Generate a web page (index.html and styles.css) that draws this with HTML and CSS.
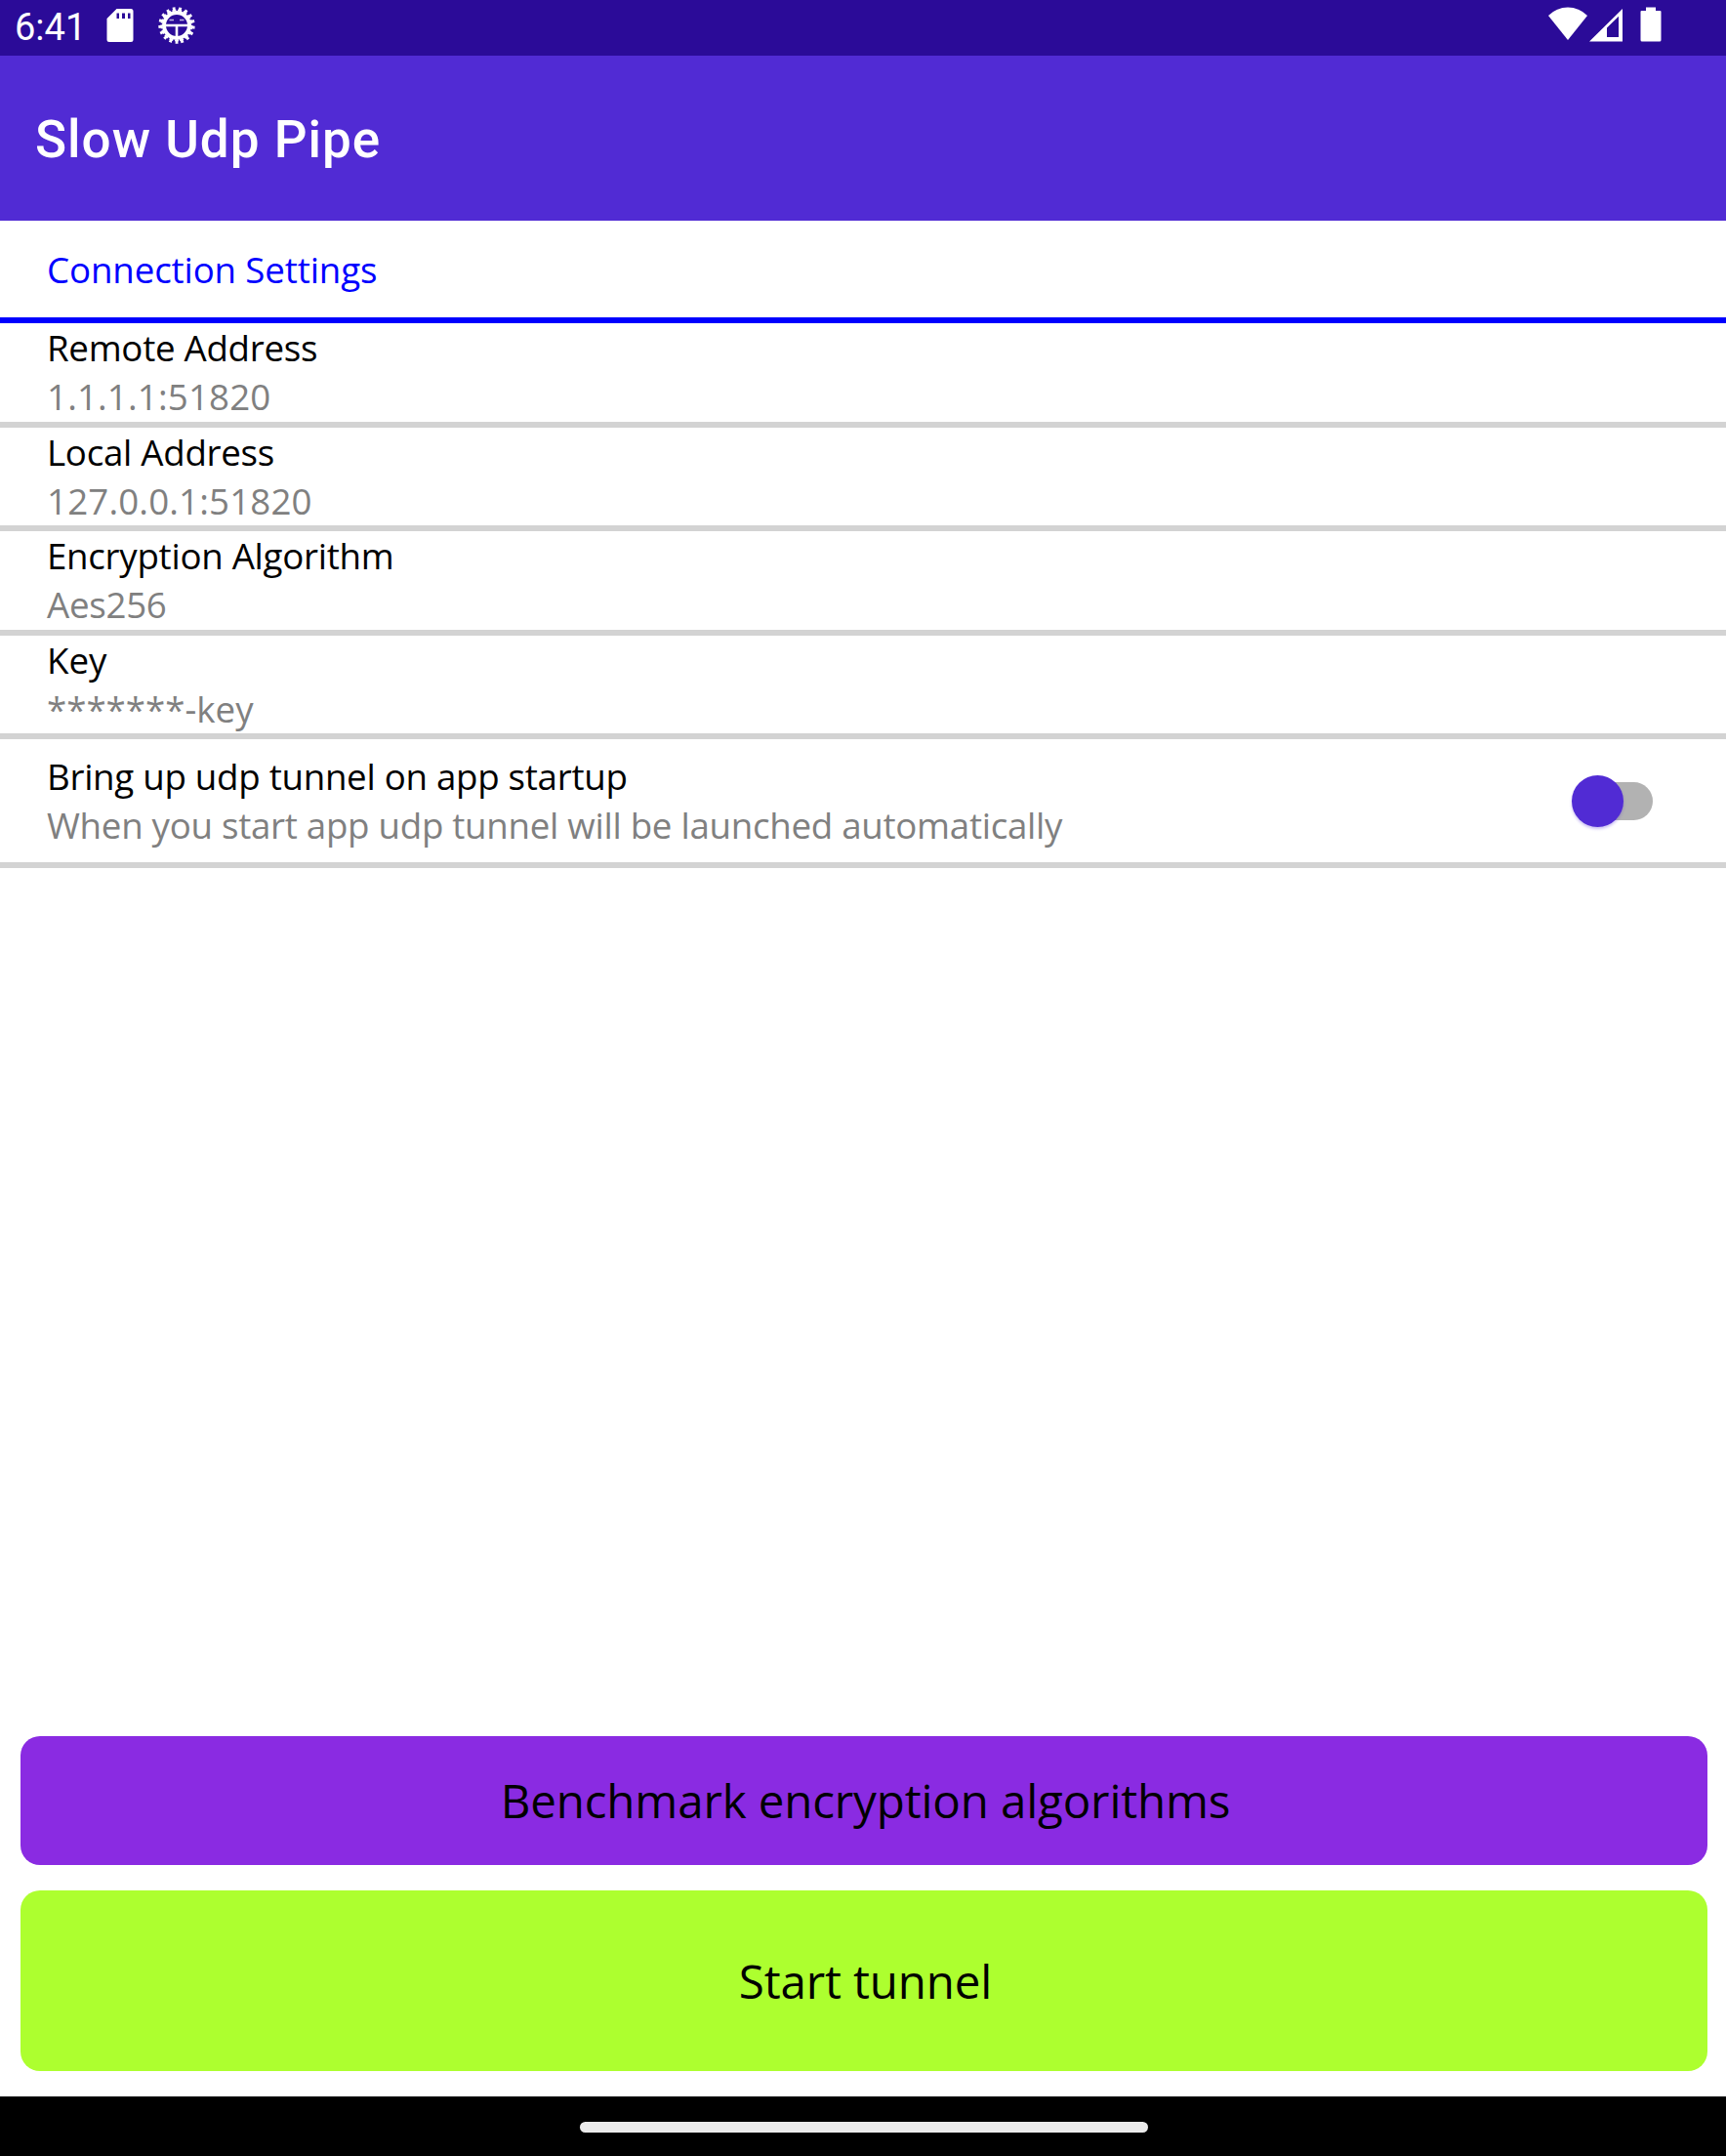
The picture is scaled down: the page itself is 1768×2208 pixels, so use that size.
FILE: index.html
```html
<!DOCTYPE html>
<html lang="en">
<head>
<meta charset="utf-8">
<title>Slow Udp Pipe</title>
<link rel="stylesheet" href="styles.css">
</head>
<body>
<div class="screen">
  <div class="status-bar">
    <span class="clock">6:41</span>
    <svg class="icon-sd" width="28" height="36" viewBox="0 0 28 36"><path fill="#fff" fill-rule="evenodd" d="M10.500 1H25Q27.500 1 27.500 3.500V32.500Q27.500 35 25 35H3Q.5 35 .5 32.500V11ZM10.500 5.500V11H13V5.500ZM16 5.500V11H19V5.500ZM22 5.500V11H24.500V5.500Z"/></svg>
    <svg class="icon-debug" width="40" height="40" viewBox="-20 -20 40 40" fill="none" stroke="#fff">
      <circle r="17" stroke-width="3.400" stroke-dasharray="2.800 3.483" transform="rotate(85.280)"/>
      <circle r="15.500" stroke-width="2" stroke-dasharray="4 1.729" transform="rotate(82.600)"/>
      <circle r="13" stroke-width="4"/>
      <path stroke-width="2.600" d="M-12 0H12M0 0V12"/>
      <path stroke-width="1.400" stroke-opacity=".7" d="M-7.500-5.500H-3M3-5.500H7.500"/>
    </svg>
    <svg class="icon-wifi" width="40" height="34" viewBox="0 0 40 34"><path fill="#fff" d="M20 34 0 9Q8.500 .5 20 .5T40 9Z"/></svg>
    <svg class="icon-signal" width="34" height="34" viewBox="0 0 34 34"><path fill="#fff" fill-rule="evenodd" d="M0 33.500 34 0V33.500ZM18 19.500V29H30V7.800Z"/></svg>
    <svg class="icon-battery" width="22" height="36" viewBox="0 0 22 36"><path fill="#fff" d="M6 4V.5H16V4H20.500Q21.500 4 21.500 5V34Q21.500 35.500 20 35.500H2Q.5 35.500 .5 34V5Q.5 4 1.500 4Z"/></svg>
  </div>
  <header class="app-bar"><h1 class="title">Slow Udp Pipe</h1></header>
  <main class="content">
    <h2 class="section"><span>Connection Settings</span></h2>
    <div class="row"><div><div class="label"><span>Remote Address</span></div><div class="value numeric"><span>1.1.1.1:51820</span></div></div></div>
    <div class="row"><div><div class="label"><span>Local Address</span></div><div class="value numeric"><span>127.0.0.1:51820</span></div></div></div>
    <div class="row"><div><div class="label"><span>Encryption Algorithm</span></div><div class="value"><span>Aes256</span></div></div></div>
    <div class="row row-key"><div><div class="label"><span>Key</span></div><div class="value"><span>*******-key</span></div></div></div>
    <div class="row row-switch">
      <div><div class="label"><span>Bring up udp tunnel on app startup</span></div><div class="value"><span>When you start app udp tunnel will be launched automatically</span></div></div>
      <div class="switch"><div class="thumb"></div></div>
    </div>
    <div class="actions">
      <button class="btn benchmark"><span>Benchmark encryption algorithms</span></button>
      <button class="btn start"><span>Start tunnel</span></button>
    </div>
  </main>
  <footer class="nav-bar"><div class="handle"></div></footer>
</div>
</body>
</html>
```
FILE: styles.css
```css
* { box-sizing: border-box; }
body { margin: 0; background: #fff; font-family: "Open Sans", sans-serif; }
h1, h2 { margin: 0; }
.screen { width: 1768px; height: 2208px; display: flex; flex-direction: column; }
.screen svg { display: block; flex: none; }

.status-bar { height: 57px; flex: none; padding: 0 66px 0 15px; display: flex; align-items: flex-start; background: #2b0b98; color: #fff; }
.clock { width: 94px; padding-top: 6px; font: 400 38px/44px Roboto, sans-serif; }
.icon-sd { margin-top: 8px; }
.icon-debug { margin: 6px auto 0 24px; }
.icon-wifi { margin: 7px 2px 0 0; }
.icon-signal { margin: 9px 18px 0 0; }
.icon-battery { margin-top: 7px; }

.app-bar { height: 169px; flex: none; padding: 3px 0 0 36px; display: flex; align-items: center; background: #512bd4; color: #fff; }
.title { font: 500 53px/62px Roboto, sans-serif; letter-spacing: 1px; }

.content { flex: 1; display: flex; flex-direction: column; }
.section { height: 105.400px; padding: 25px 0 0 48px; border-bottom: 6px solid #00f; color: #00f; font-size: 36.700px; font-weight: 400; line-height: 50px; letter-spacing: -.13px; }
.row { height: 106.400px; padding-left: 48px; border-bottom: 6px solid #d3d3d3; font-size: 36.700px; font-weight: 400; line-height: 50px; letter-spacing: -.28px; white-space: nowrap; }
.row-switch { height: 132.500px; padding-right: 75px; display: flex; align-items: center; justify-content: space-between; }
.label { color: #000; }
.value { color: #808080; }
.numeric { letter-spacing: .16px; }
.row-key { letter-spacing: 0; }

.switch { width: 77px; height: 39px; background: #b2b2b2; border-radius: 19.500px; display: flex; }
.thumb { flex: none; width: 53px; height: 53px; margin: -7px 0 0 -6px; border-radius: 50%; background: #512bd4; box-shadow: 0 2px 3px rgba(81, 43, 212, .3); }

.actions { margin-top: auto; padding: 0 19px 26px 21px; display: flex; flex-direction: column; gap: 26px; }
.btn { border: 0; border-radius: 20px; padding: 0 0 0 3px; font: 400 47.500px/64px "Open Sans", sans-serif; letter-spacing: -.14px; color: #000; }
.benchmark { height: 132px; background: #8a2be2; }
.start { height: 185px; background: #adff2f; }

.nav-bar { height: 61px; flex: none; display: flex; justify-content: center; padding: 26px 0 0 2px; background: #000; }
.handle { width: 582px; height: 11px; border-radius: 6px; background: #ebebeb; }
```
